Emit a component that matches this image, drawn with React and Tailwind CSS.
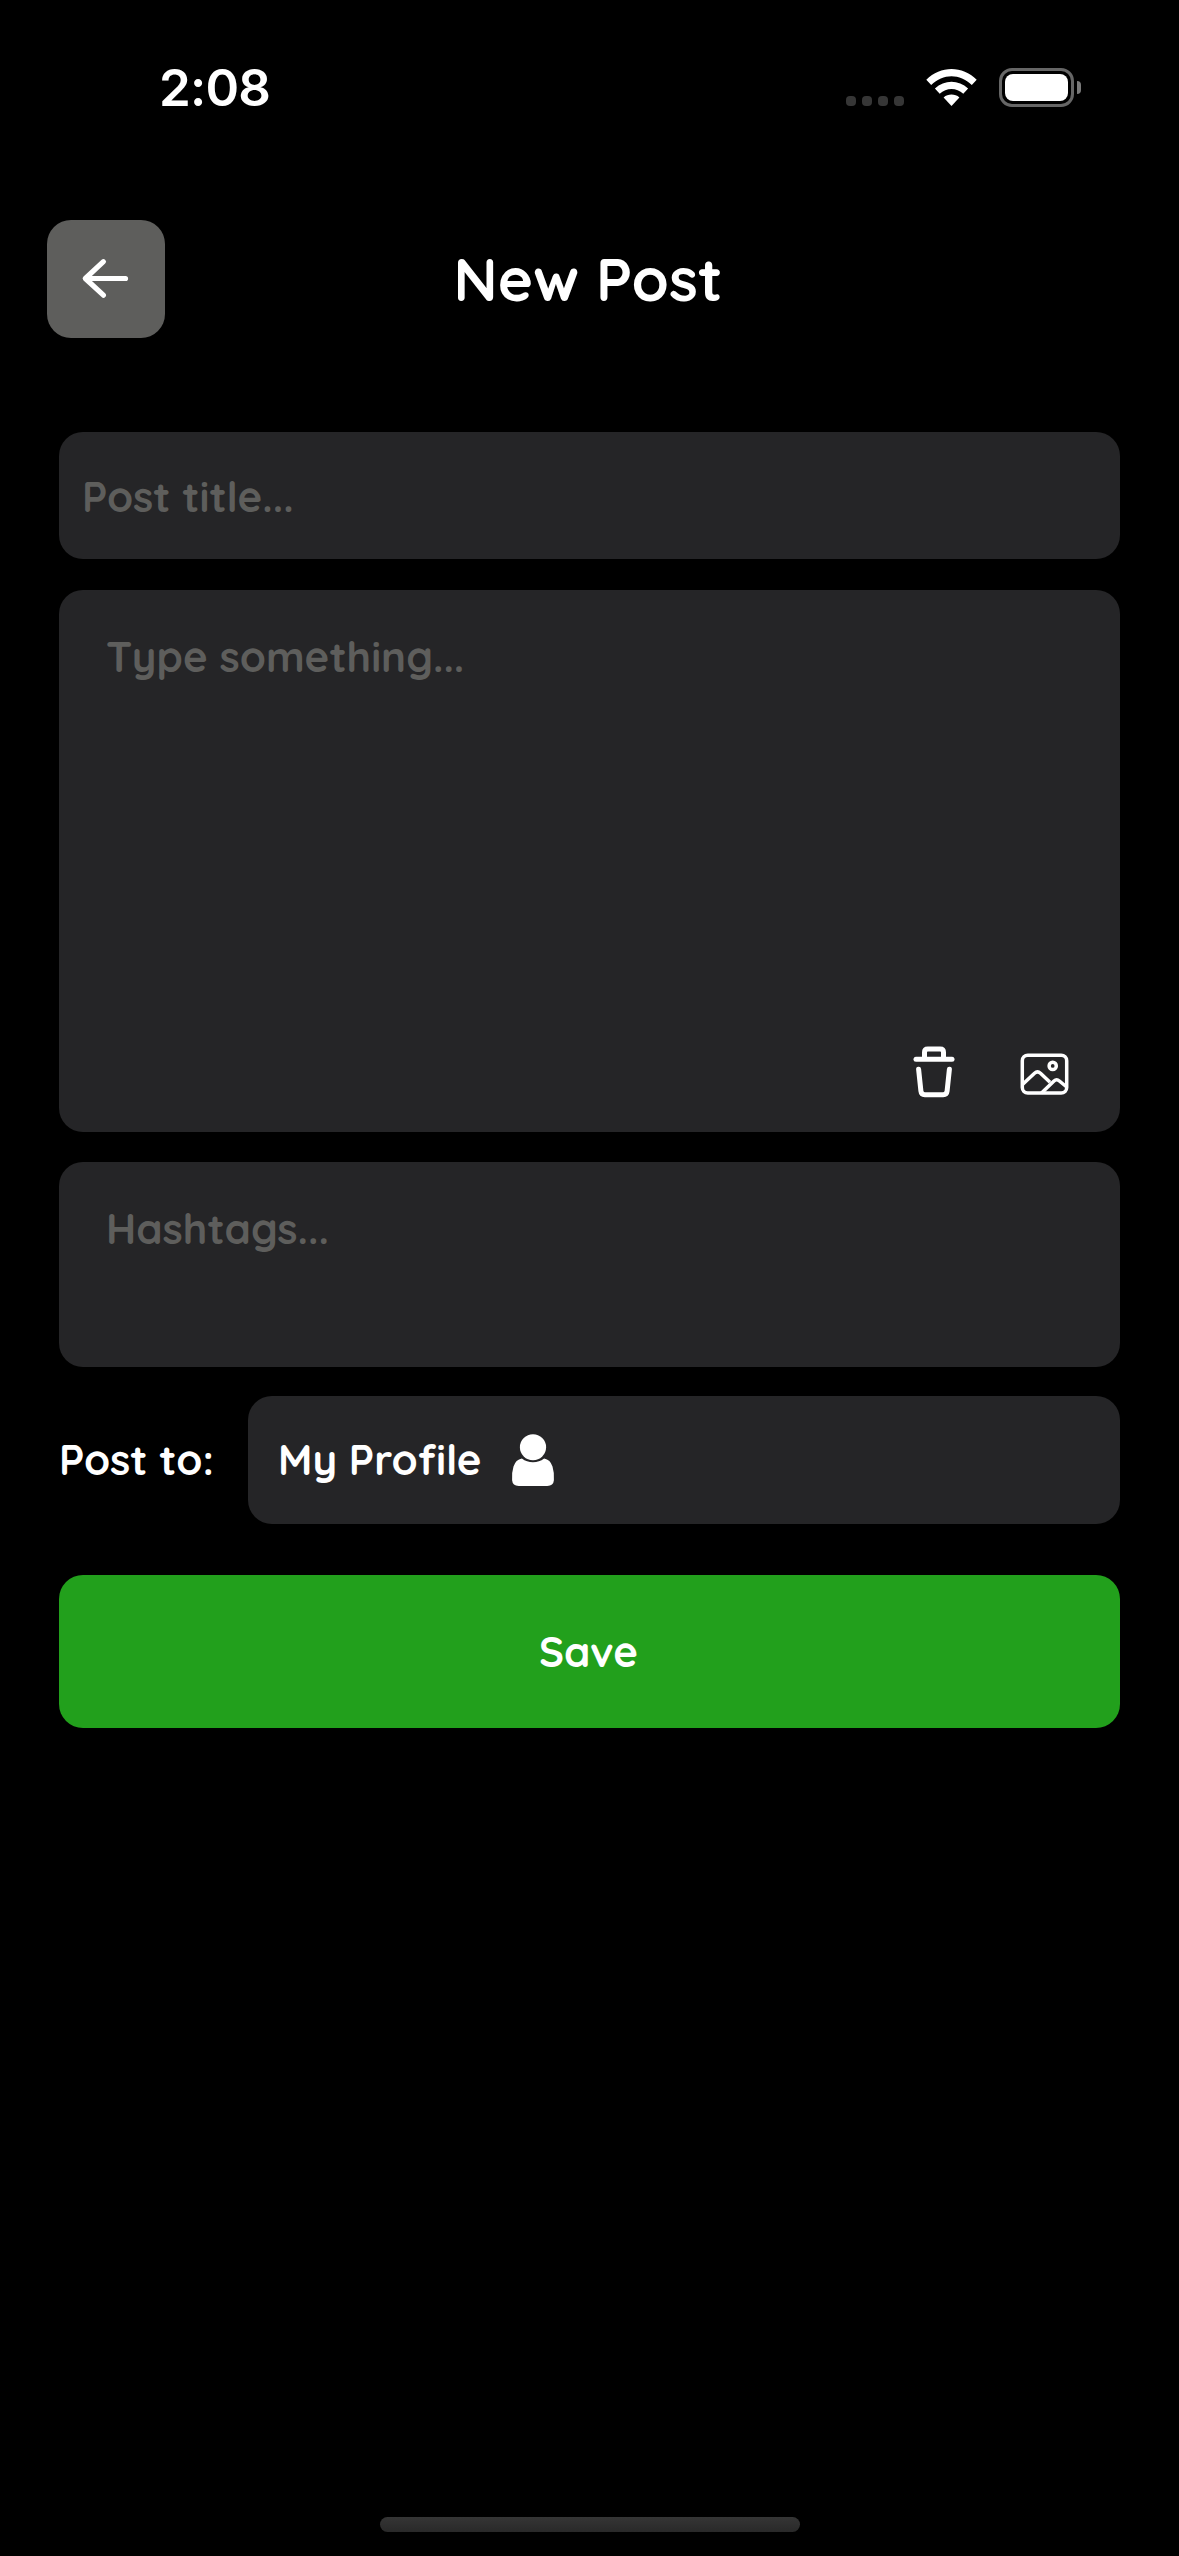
import React from "react";

function StatusBar() {
  return (
    <header className="flex h-[176px] items-start justify-between pr-[98px] pl-[159px]">
      <time className="mt-[63px] font-[Inter,sans-serif] text-[51px] leading-[50px] font-semibold tracking-[-0.8px]">
        2:08
      </time>
      <div className="mt-[68px] flex items-start">
        <div className="mt-[28px] flex gap-[6px]">
          <span className="size-[10px] rounded-[4px] bg-[#363636]" />
          <span className="size-[10px] rounded-[4px] bg-[#363636]" />
          <span className="size-[10px] rounded-[4px] bg-[#363636]" />
          <span className="size-[10px] rounded-[4px] bg-[#363636]" />
        </div>
        <svg className="ml-[22px] h-[39px] w-[51px]" viewBox="0 0 51 39" fill="#fff">
          <path d="M0.3 11.8C14.5-2.6 36.5-2.6 50.7 11.8L45.8 16.9C34 5.3 17 5.3 5.2 16.9Z" />
          <path d="M8.9 20.6C18.5 11.6 32.5 11.6 42.1 20.6L37.3 25.7C30.5 19.4 20.5 19.4 13.7 25.7Z" />
          <path d="M17.6 29.4C22 25.6 29 25.6 33.4 29.4L25.5 38Z" />
        </svg>
        <div className="ml-[22px] flex items-center">
          <div className="h-[39px] w-[75px] rounded-[13px] border-3 border-[#666] p-[3px]">
            <div className="h-full w-full rounded-[8px] bg-white" />
          </div>
          <div className="ml-[3px] h-[13px] w-[4px] rounded-r-full bg-[#7a7a7a]" />
        </div>
      </div>
    </header>
  );
}

function BackArrow() {
  return (
    <svg className="size-[60px]" viewBox="0 0 60 60" fill="none" stroke="#fff" strokeWidth="5.2" strokeLinecap="round" strokeLinejoin="round">
      <path d="M49.5 29.5H9.5M27.4 12.7 9.3 29.5 27.4 46.2" />
    </svg>
  );
}

function TrashIcon() {
  return (
    <svg className="h-[54px] w-[42px]" viewBox="0 0 42 54" fill="none" stroke="#fff" strokeWidth="5" strokeLinecap="round" strokeLinejoin="round">
      <path d="M3 15.3H39" />
      <path d="M11.5 14V8.3q0-3.3 3.3-3.3h12.4q3.3 0 3.3 3.3V14" />
      <path d="M5.6 25.3 7.9 47q.4 3.7 3.9 3.7h18.4q3.5 0 3.9-3.7L36.4 25.3" />
    </svg>
  );
}

function ImageIcon() {
  return (
    <svg className="h-[42px] w-[49px]" viewBox="0 0 49 42" fill="none" stroke="#fff" strokeWidth="3.5" strokeLinejoin="round">
      <rect x="2.3" y="2.2" width="44.4" height="37.8" rx="5.5" />
      <circle cx="32.7" cy="12.9" r="3.6" />
      <path d="M2.5 31.5 14.5 20.2q3-2.7 6 0L30 29.3" />
      <path d="M21.5 40 34 28q2.6-2.4 5.4 0l7.3 6" />
    </svg>
  );
}

function PersonIcon() {
  return (
    <svg className="h-[53px] w-[44px]" viewBox="0 0 44 53" fill="#fff">
      <ellipse cx="22" cy="13.3" rx="13.1" ry="13" />
      <path d="M10.9 24.4q4.8 3.8 11.1 3.8t11.1-3.8q6.3 1 8.4 8.2 1.8 5.6 1.4 13.6-.5 5.7-6.6 5.7H7.7q-6.1 0-6.6-5.7-.4-8 1.4-13.6 2.1-7.2 8.4-8.2Z" />
    </svg>
  );
}

export default function App() {
  return (
    <div className="flex h-[2556px] w-[1179px] flex-col bg-black font-[Quicksand,Lato,sans-serif] text-[42px] leading-[52px] font-bold text-white">
      <StatusBar />

      <div className="mt-[44px] grid grid-cols-[118px_1fr_118px] items-center px-[47px]">
        <button className="flex size-[118px] items-center justify-center rounded-3xl bg-[#5e5e5c]">
          <BackArrow />
        </button>
        <h1 className="pr-[3px] pb-[2px] text-center text-[60px] leading-[75px]">New Post</h1>
      </div>

      <main className="mt-[94px] flex flex-col px-[59px]">
        <div className="flex h-[127px] items-center rounded-3xl bg-[#252527] px-[23px] pt-[2px] text-[#5e5e5c]">
          Post title...
        </div>

        <section className="mt-[31px] flex h-[542px] flex-col justify-between rounded-3xl bg-[#252527] pt-[41px] pr-[51px] pb-[34px] pl-[47px]">
          <p className="text-[#5e5e5c]">Type something...</p>
          <div className="flex items-end justify-end gap-[65px]">
            <TrashIcon />
            <div className="pb-[3px]">
              <ImageIcon />
            </div>
          </div>
        </section>

        <div className="mt-[30px] h-[205px] rounded-3xl bg-[#252527] pt-[41px] pl-[47px] text-[#5e5e5c]">
          Hashtags...
        </div>

        <div className="mt-[29px] flex items-center">
          <span className="w-[189px]">Post to:</span>
          <div className="flex h-[128px] flex-1 items-center rounded-3xl bg-[#252527] pl-[30px]">
            <span className="w-[233px]">My Profile</span>
            <PersonIcon />
          </div>
        </div>

        <button className="mt-[51px] h-[153px] rounded-3xl bg-[#22a01c] pr-[2px]">Save</button>
      </main>

      <div className="mt-auto mb-[24px] h-[15px] w-[420px] self-center rounded-full bg-linear-to-b from-[#353535] to-[#292929]" />
    </div>
  );
}
